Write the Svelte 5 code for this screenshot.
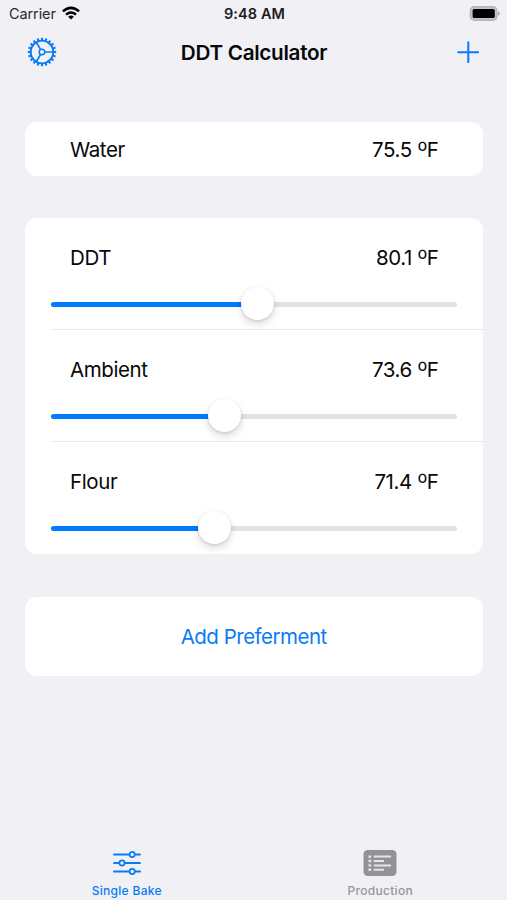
<script>
  const sliders = [
    { label: 'DDT', value: '80.1', pos: 206 },
    { label: 'Ambient', value: '73.6', pos: 173 },
    { label: 'Flour', value: '71.4', pos: 163 }
  ];
  const teeth = Array.from({ length: 20 }, (_, i) => i * 18);
</script>

{#snippet reading(value)}
  <span class="value">{value} <span class="degree">º</span>F</span>
{/snippet}

<div class="screen">
  <div class="status">
    <div class="carrier">
      <span>Carrier</span>
      <svg width="18" height="14" viewBox="0 0 18 14" fill="none" stroke="#000" stroke-width="2.5">
        <path d="M.9 5.4Q9-1.6 17.1 5.4M4 8.6Q9 4.5 14 8.6" />
        <path d="M6.1 10.7Q9 8.4 11.9 10.7L9 13.6Z" fill="#000" stroke="none" />
      </svg>
    </div>
    <div class="time">9:48 AM</div>
    <div class="battery">
      <svg width="31" height="15" viewBox="0 0 31 15">
        <rect x="1.4" y=".8" width="26.5" height="13.4" rx="3.8" fill="#c4c4c8" stroke="#b4b4b8" stroke-width="1.4" />
        <rect x="3.6" y="2.9" width="22.2" height="9.2" rx="1.6" fill="#000" />
        <path d="M29 5.2Q30.8 5.8 30.8 7.5T29 9.8Z" fill="#aeaeb2" />
      </svg>
    </div>
  </div>

  <header>
    <svg class="gear" width="30" height="30" viewBox="-15 -15 30 30" fill="none" stroke="#087cf5">
      <circle r="11.3" stroke-width="1.8" />
      {#each teeth as angle}
        <path d="M0-11.6V-14.2" stroke-width="2.1" transform="rotate({angle})" />
      {/each}
      <circle r="2.8" stroke-width="1.5" />
      <path d="M2.8 0H11M-1.4-2.4L-5.5-9.5M-1.4 2.4L-5.5 9.5" stroke-width="1.7" />
    </svg>
    <h1>DDT Calculator</h1>
    <svg class="plus" width="22" height="22" viewBox="0 0 22 22" stroke="#087cf5" stroke-width="2" stroke-linecap="round">
      <path d="M11.3 1.3V21.3M1.3 11.3H21.3" />
    </svg>
  </header>

  <main>
    <section class="card water">
      <span class="label">Water</span>{@render reading('75.5')}
    </section>

    <section class="card sliders">
      {#each sliders as s}
        <div class="item">
          <div class="line">
            <span class="label">{s.label}</span>
            {@render reading(s.value)}
          </div>
          <div class="track">
            <div class="fill" style="width: {s.pos}px"></div>
            <div class="thumb" style="left: {s.pos}px"></div>
          </div>
        </div>
      {/each}
    </section>

    <section class="card add"><span>Add Preferment</span></section>
  </main>

  <nav>
    <div class="tab active">
      <svg width="30" height="26" viewBox="0 0 30 26" fill="none" stroke="#087cf5" stroke-width="1.9" stroke-linecap="round">
        <path d="M2 4.5H17.3M23 4.5H28M2 13H7.2M12.8 13H28M2 21.5H17.3M23 21.5H28" />
        <circle cx="20.2" cy="4.5" r="2.6" stroke-width="1.7" />
        <circle cx="10" cy="13" r="2.6" stroke-width="1.7" />
        <circle cx="20.2" cy="21.5" r="2.6" stroke-width="1.7" />
      </svg>
      <span>Single Bake</span>
    </div>
    <div class="tab production">
      <svg width="34" height="26" viewBox="0 0 34 26">
        <rect x=".5" width="33" height="26" rx="4.2" fill="#929297" />
        <g stroke="#e6e6ea" stroke-width="2">
          <path d="M5.5 6.6H8.2M5.5 11H8.2M5.5 15.4H8.2M5.5 19.8H8.2" stroke-width="2.4" />
          <path d="M10.7 6.6H28M10.7 11H21M10.7 15.4H28M10.7 19.8H21" />
        </g>
      </svg>
      <span>Production</span>
    </div>
  </nav>
</div>

<style>
  :global(body) { margin: 0; background: #f0f0f5; }
  .screen {
    width: 507px; height: 900px; background: #f0f0f5; color: #080808;
    font-family: Inter, "Liberation Sans", sans-serif; overflow: hidden;
    display: flex; flex-direction: column;
  }
  .status {
    height: 27px; box-sizing: border-box; padding: 0 7px 0 9px;
    display: grid; grid-template-columns: 1fr auto 1fr; align-items: center;
    font-size: 14.5px; line-height: 27px;
  }
  .carrier { display: flex; align-items: center; gap: 6px; letter-spacing: -0.1px; color: #2a2a2c; }
  .carrier svg { margin-top: -1px; }
  .time { font-weight: 600; letter-spacing: 0.1px; color: #1c1c1e; }
  .battery { display: flex; justify-content: flex-end; margin-top: -1px; }
  header {
    height: 51px; padding: 0 28px 0 27px; display: grid;
    grid-template-columns: 1fr auto 1fr; align-items: center;
  }
  .gear, .plus { margin-top: -1px; }
  h1 { margin: 0; font-size: 20.7px; font-weight: 600; letter-spacing: -0.3px; white-space: nowrap; padding-left: 2px; }
  .plus { justify-self: end; }
  main { padding: 44px 25px 0; flex: 1; }
  .card { background: #fff; border-radius: 12px; width: 457.5px; font-size: 20.5px; letter-spacing: -0.4px; }
  .water {
    height: 53.5px; box-sizing: border-box; padding: 2px 44px 0 45px;
    display: flex; justify-content: space-between; align-items: center;
  }
  .value { line-height: 26px; }
  .degree { font-size: 24px; font-weight: 300; line-height: 0; position: relative; top: 2px; letter-spacing: -0.8px; }
  .sliders { height: 336px; margin-top: 42.5px; }
  .item { height: 112px; box-sizing: border-box; padding: 27px 25.5px 0 26px; position: relative; }
  .item:not(:last-child)::after {
    content: ""; position: absolute; left: 26px; right: 0; bottom: 0; height: 1px; background: #e8e8ea;
  }
  .line { display: flex; justify-content: space-between; line-height: 26px; padding: 0 18.5px 0 19px; }
  .track { position: relative; height: 5px; border-radius: 3px; background: #e3e3e4; margin-top: 31px; }
  .fill { height: 5px; border-radius: 3px; background: #007aff; }
  .thumb {
    position: absolute; top: -15.5px; width: 33px; height: 33px; border-radius: 50%; margin-left: -16.5px;
    background: #fff; box-shadow: 0 4px 9px rgba(0, 0, 0, .14), 0 1px 3px rgba(0, 0, 0, .13);
  }
  .add {
    height: 79px; margin-top: 42.5px; color: #087cf5; letter-spacing: -0.5px;
    display: flex; align-items: center; justify-content: center;
  }
  nav { height: 51px; display: flex; }
  .tab {
    flex: 1; display: flex; flex-direction: column; align-items: center;
    padding-top: 1px; font-size: 12px; font-weight: 500; color: #96969b; letter-spacing: 0.3px;
  }
  .tab span { line-height: 16px; margin-top: 7px; white-space: nowrap; }
  .active { color: #087cf5; }
</style>
